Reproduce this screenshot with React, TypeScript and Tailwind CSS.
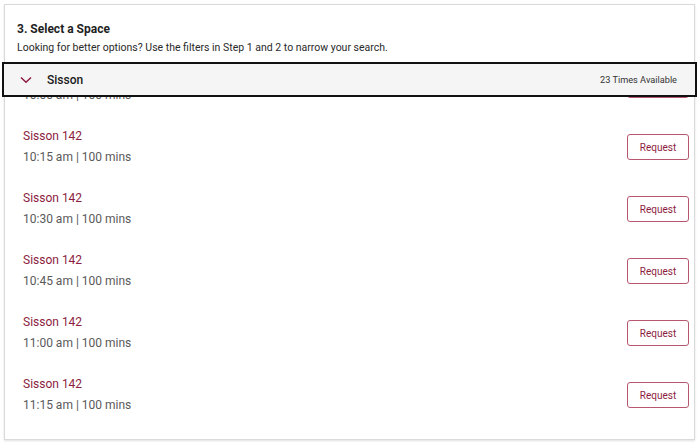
import React from "react";

const rows = ["10:00 am", "10:15 am", "10:30 am", "10:45 am", "11:00 am", "11:15 am"];

function Row({ time }: { time: string }) {
  return (
    <div className="flex h-[62px] items-center justify-between pl-[18px] pr-[5px]">
      <div className="flex flex-col">
        <div className="text-[12px] leading-[21px] text-[#8c1d40]">Sisson 142</div>
        <div className="text-[12px] leading-[21px] text-[#5a5a5a]">{time} | 100 mins</div>
      </div>
      <button className="h-[26px] w-[62px] rounded-[3px] border border-[#b8566f] bg-white text-[10px] text-[#8c1d40]">
        Request
      </button>
    </div>
  );
}

export default function App() {
  return (
    <div className="h-[444px] w-[700px] bg-white p-[4px] font-['Roboto',sans-serif]">
      <div className="flex h-[436px] w-[691px] flex-col border border-[#dadada] shadow-[0_1px_2px_rgba(0,0,0,0.12)]">
        <div className="flex h-[57px] flex-col px-[12px] pt-[15px]">
          <div className="text-[12px] font-bold leading-[18px] text-[#1f1f1f]">3. Select a Space</div>
          <div className="mt-[2px] text-[10.5px] leading-[16px] text-[#2a2a2a]">
            Looking for better options? Use the filters in Step 1 and 2 to narrow your search.
          </div>
        </div>
        <div className="relative flex-1">
          <div className="absolute -left-[3px] -right-[3px] top-0 z-10 flex h-[35px] items-center justify-between border-2 border-[#111] bg-[#f5f5f5] pl-[16px] pr-[18px]">
            <div className="flex items-center">
              <svg width="12" height="8" viewBox="0 0 12 8" className="mr-[15px]">
                <path d="M1 1.5 L6 6.2 L11 1.5" fill="none" stroke="#8c1d40" strokeWidth="1.5" />
              </svg>
              <span className="text-[12px] font-medium text-[#1a1a1a]">Sisson</span>
            </div>
            <span className="text-[9.2px] text-[#333]">23 Times Available</span>
          </div>
          <div className="h-full overflow-hidden">
            <div className="-mt-[8px] flex flex-col">
              {rows.map((t) => (
                <Row key={t} time={t} />
              ))}
            </div>
          </div>
        </div>
      </div>
    </div>
  );
}
